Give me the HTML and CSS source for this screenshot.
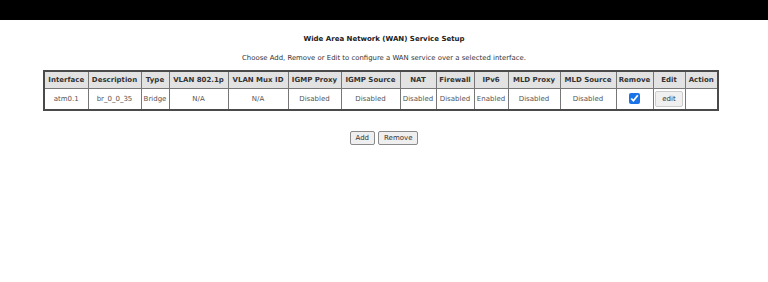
FILE: index.html
```html
<!DOCTYPE html>
<html lang="en">
<head>
    <meta charset="UTF-8">
    <title>WAN Service Setup</title>
    <link rel="stylesheet" href="styles.css">
</head>
<body>
    <div class="topbar"></div>
    <div class="content">
        <div class="title">Wide Area Network (WAN) Service Setup</div>
        <div class="intro">Choose Add, Remove or Edit to configure a WAN service over a selected interface.</div>

        <div class="table-wrap">
            <table class="wan-table">
                <colgroup>
                    <col class="c-iface">
                    <col class="c-desc">
                    <col class="c-type">
                    <col class="c-vlan">
                    <col class="c-mux">
                    <col class="c-igmp">
                    <col class="c-igmpsrc">
                    <col class="c-nat">
                    <col class="c-fw">
                    <col class="c-ipv6">
                    <col class="c-mld">
                    <col class="c-mldsrc">
                    <col class="c-remove">
                    <col class="c-edit">
                    <col class="c-action">
                </colgroup>
                <thead>
                    <tr>
                        <th>Interface</th>
                        <th>Description</th>
                        <th>Type</th>
                        <th>VLAN 802.1p</th>
                        <th>VLAN Mux ID</th>
                        <th>IGMP Proxy</th>
                        <th>IGMP Source</th>
                        <th>NAT</th>
                        <th>Firewall</th>
                        <th>IPv6</th>
                        <th>MLD Proxy</th>
                        <th>MLD Source</th>
                        <th>Remove</th>
                        <th>Edit</th>
                        <th>Action</th>
                    </tr>
                </thead>
                <tbody>
                    <tr>
                        <td>atm0.1</td>
                        <td>br_0_0_35</td>
                        <td>Bridge</td>
                        <td>N/A</td>
                        <td>N/A</td>
                        <td>Disabled</td>
                        <td>Disabled</td>
                        <td>Disabled</td>
                        <td>Disabled</td>
                        <td>Enabled</td>
                        <td>Disabled</td>
                        <td>Disabled</td>
                        <td><input type="checkbox" class="rm-check" checked></td>
                        <td><button class="btn small">edit</button></td>
                        <td></td>
                    </tr>
                </tbody>
            </table>
        </div>

        <div class="actions">
            <button class="btn">Add</button><button class="btn">Remove</button>
        </div>
    </div>
</body>
</html>
```

FILE: styles.css
```css
* {
    margin: 0;
    padding: 0;
    box-sizing: border-box;
}

body {
    font-family: "DejaVu Sans", Verdana, sans-serif;
    font-size: 7px;
    color: #333;
    background: #fff;
}

.topbar {
    height: 20px;
    background: #000;
}

.content {
    text-align: center;
}

.title {
    margin-top: 14px;
    font-size: 7px;
    font-weight: bold;
    color: #222;
    line-height: 10px;
}

.intro {
    margin-top: 9px;
    font-size: 6.9px;
    line-height: 10px;
    color: #333;
}

/* table sits a few px left of the page centre */
.table-wrap {
    margin-top: 7px;
    padding-right: 6px;
}

.wan-table {
    margin: 0 auto;
    width: 674px;
    table-layout: fixed;
    border-collapse: collapse;
    border: 2px solid #4a4a4a;
}

.c-iface { width: 44px; }
.c-desc { width: 53px; }
.c-type { width: 28px; }
.c-vlan { width: 59px; }
.c-mux { width: 60px; }
.c-igmp { width: 53px; }
.c-igmpsrc { width: 59px; }
.c-nat { width: 36px; }
.c-fw { width: 38px; }
.c-ipv6 { width: 34px; }
.c-mld { width: 52px; }
.c-mldsrc { width: 56px; }
.c-remove { width: 37px; }
.c-edit { width: 32px; }
.c-action { width: 33px; }

.wan-table th,
.wan-table td {
    border: 1px solid #777;
    text-align: center;
    white-space: nowrap;
    overflow: hidden;
}

.wan-table th {
    height: 17px;
    background: #e2e2e2;
    font-weight: bold;
    color: #333;
    font-size: 7px;
}

.wan-table td {
    height: 22px;
    color: #555;
    font-size: 7px;
}

.rm-check {
    width: 11px;
    height: 11px;
    vertical-align: middle;
    accent-color: #1a73e8;
}

.btn {
    font-family: "DejaVu Sans", Verdana, sans-serif;
    font-size: 7px;
    color: #333;
    background: #efefef;
    border: 1px solid #8a8a8a;
    border-radius: 2px;
    padding: 2px 5px;
    line-height: 8px;
}

.btn + .btn {
    margin-left: 3px;
}

.btn.small {
    border-color: #ccc;
    padding: 3px 6px;
    background: #f0f0f0;
}

.actions {
    margin-top: 20px;
}
```
